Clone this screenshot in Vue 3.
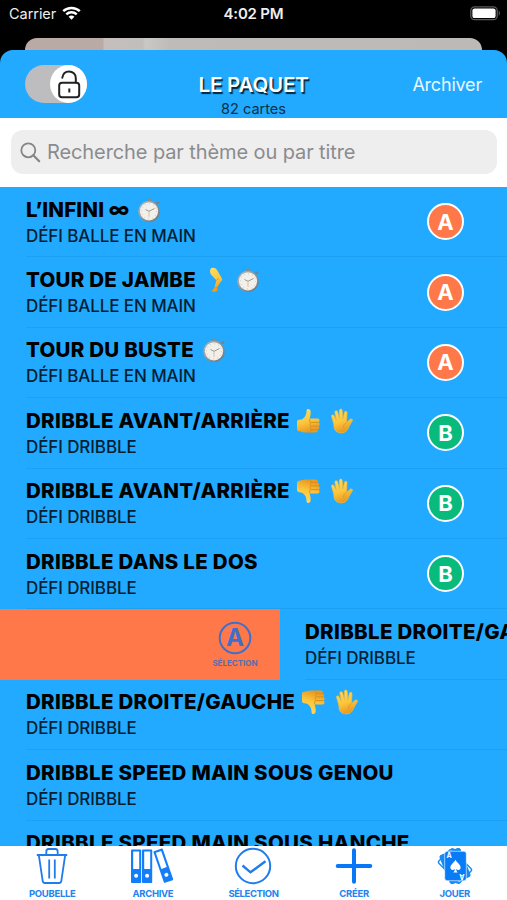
<script setup>
const rows = [
  { title: 'L’INFINI ∞', theme: 'DÉFI BALLE EN MAIN', icons: ['watch'], badge: 'A', fit: 'infini' },
  { title: 'TOUR DE JAMBE', theme: 'DÉFI BALLE EN MAIN', icons: ['leg', 'watch'], badge: 'A', fit: 'tour' },
  { title: 'TOUR DU BUSTE', theme: 'DÉFI BALLE EN MAIN', icons: ['watch'], badge: 'A', fit: 'tour' },
  { title: 'DRIBBLE AVANT/ARRIÈRE', theme: 'DÉFI DRIBBLE', icons: ['up', 'hand'], badge: 'B' },
  { title: 'DRIBBLE AVANT/ARRIÈRE', theme: 'DÉFI DRIBBLE', icons: ['down', 'hand'], badge: 'B' },
  { title: 'DRIBBLE DANS LE DOS', theme: 'DÉFI DRIBBLE', icons: [], badge: 'B' },
  { title: 'DRIBBLE DROITE/GAUCHE', theme: 'DÉFI DRIBBLE', icons: [], swiped: true },
  { title: 'DRIBBLE DROITE/GAUCHE', theme: 'DÉFI DRIBBLE', icons: ['down', 'hand'] },
  { title: 'DRIBBLE SPEED MAIN SOUS GENOU', theme: 'DÉFI DRIBBLE', icons: [] },
  { title: 'DRIBBLE SPEED MAIN SOUS HANCHE', theme: 'DÉFI DRIBBLE', icons: [] },
]
const tabs = [
  { id: 'bin', label: 'POUBELLE' },
  { id: 'archive', label: 'ARCHIVE' },
  { id: 'check', label: 'SÉLECTION' },
  { id: 'plus', label: 'CRÉER' },
  { id: 'cards', label: 'JOUER' },
]
</script>

<template>
  <div class="screen">
    <svg class="defs" width="0" height="0">
      <defs>
        <linearGradient id="skin" x1="0" y1="0" x2="0.3" y2="1">
          <stop offset="0" stop-color="#ffdc68" /><stop offset="0.6" stop-color="#fcc63c" /><stop offset="1" stop-color="#e99b22" />
        </linearGradient>
        <linearGradient id="steel" x1="0" y1="0" x2="1" y2="1">
          <stop offset="0" stop-color="#b5babc" /><stop offset="1" stop-color="#6c7275" />
        </linearGradient>
        <symbol id="watch" viewBox="0 0 24 26">
          <rect x="10" y="1.5" width="4.5" height="4" rx="1" fill="#858b8e" />
          <path d="M18 7 21.5 5.5" stroke="#7b8183" stroke-width="2" stroke-linecap="round" />
          <circle cx="12" cy="14.5" r="10.7" fill="url(#steel)" />
          <circle cx="12" cy="14.3" r="9.1" fill="#f2f0ea" />
          <circle cx="12" cy="14.3" r="7.6" fill="none" stroke="#b9b7b1" stroke-width="1" stroke-dasharray="0.7 3.28" />
          <path d="M8.5 12.5 12 14.3 17.5 11.5" fill="none" stroke="#8a827c" stroke-width="0.8" />
          <path d="M12 14.3V20" stroke="#c99a8e" stroke-width="0.6" />
        </symbol>
        <symbol id="leg" viewBox="0 0 24 26">
          <path d="M7.2 1.2C9 .2 12 1 13.2 3.2L18 11.4C18.8 13 17.5 14 16.4 15.2L13.1 20.5 13.5 23C13.6 24.5 11.5 25 9 24.7 7.2 24.6 7.8 23 9.7 22.3L10.5 20.6 12.4 13.3 7.6 8.2C5.5 6 5.7 2.1 7.2 1.2Z" fill="url(#skin)" />
          <path d="M12.4 13.3 14.7 11.5M10.5 21 13.3 20.4" fill="none" stroke="#d98c1f" stroke-width="0.8" />
        </symbol>
        <symbol id="thumb" viewBox="0 0 24 26">
          <path d="M1 14C1 12 2.4 11.8 4.2 11.8 7.8 11.2 9.5 8.5 10.3 5.6L10.6 2.3C11 .3 14.2.5 14.6 3.2 14.9 6 14.2 8.4 13.7 10.6H21.6C24 10.6 24 14 22.3 14.4 24.3 14.8 24 17.8 22.1 18.1 23.7 18.7 23.3 21.4 21.4 21.6 22.6 22.5 21.5 24.5 19.6 24.6H10C6.6 24.6 5.4 23.7 3 23.3 1 23 1 21.8 1 20Z" fill="url(#skin)" />
          <path d="M22.3 14.4H15.2C13.6 14.4 13.3 12.5 14 10.8M22 18.1H15.5C13.8 18.1 13.7 15.4 15.1 14.4M21.4 21.6H15.8C14.1 21.6 14.1 19 15.5 18.1M15.8 21.6C14.3 22 14.5 23.7 15.1 24.5" fill="none" stroke="#d88c1b" stroke-width="0.9" />
        </symbol>
        <symbol id="hand" viewBox="0 0 24 26">
          <path d="M3.8 16 1.6 8.6C1.1 6.8 3.2 6 4 7.7L6.4 12.4 4.9 4.4C4.6 2.5 7 2 7.6 3.8L9.6 11.3 9.4 2.6C9.4.6 12.1.6 12.2 2.6L12.9 11.3 14.4 4.4C14.8 2.6 17.2 3 17 4.9L16.5 14.8 19.7 11.6C21 10.3 23.3 11.1 22.3 12.8L19.1 18.2C17.8 21.8 15.6 24.9 11.4 24.9 6.5 24.9 4 22 4 18.2Z" fill="url(#skin)" stroke="#f5bb37" stroke-width="0.7" />
          <path d="M16.3 14.8C14.1 15.8 13.3 17.6 13.6 19.6" fill="none" stroke="#dc951f" stroke-width="0.8" stroke-linecap="round" />
        </symbol>
      </defs>
    </svg>

    <header class="top">
      <div class="status">
        <div class="carrier">
          <span>Carrier</span>
          <svg width="19" height="14" viewBox="0 0 19 14">
            <path d="M1.2 5.2C5.8.8 13.2.8 17.8 5.2M4.3 8.3C7.2 5.6 11.8 5.6 14.7 8.3" fill="none" stroke="#fff" stroke-width="2.5" />
            <path d="M9.5 13.7 6.6 10.7C8.3 9.2 10.7 9.2 12.4 10.7Z" fill="#fff" />
          </svg>
        </div>
        <strong>4:02 PM</strong>
        <svg class="battery" width="31" height="15" viewBox="0 0 31 15">
          <rect x="0.8" y="0.8" width="26.4" height="12.9" rx="3.8" fill="none" stroke="#5b5b5b" stroke-width="1.3" />
          <rect x="2.4" y="2.4" width="23.2" height="9.7" rx="2.2" fill="#fff" />
          <path d="M28.7 4.8C30.3 5.3 30.3 9.2 28.7 9.7Z" fill="#5b5b5b" />
        </svg>
      </div>
      <div class="behind"></div>
      <div class="navbar">
        <div class="toggle">
          <div class="knob">
            <svg width="24" height="29" viewBox="0 0 24 29">
              <rect x="2.2" y="12.7" width="20" height="14.6" rx="2.8" fill="none" stroke="#222" stroke-width="2" />
              <path d="M5.3 7.7C6 3.5 8.6 1.5 12 1.5 15.8 1.5 18.8 4.2 18.8 8V12.5" fill="none" stroke="#222" stroke-width="2" stroke-linecap="round" />
              <path d="M12.3 18.5V22.5" stroke="#222" stroke-width="2" />
            </svg>
          </div>
        </div>
        <div class="heading">
          <h1>LE PAQUET</h1>
          <p>82 cartes</p>
        </div>
        <span class="archive">Archiver</span>
      </div>
    </header>

    <div class="search-bar">
      <div class="search">
        <svg width="21" height="21" viewBox="0 0 21 21" fill="none" stroke="#858589" stroke-width="1.8">
          <circle cx="8.3" cy="8.3" r="7" /><path d="M13.3 13.3 19.2 19.2" stroke-width="2.2" stroke-linecap="round" />
        </svg>
        <span>Recherche par thème ou par titre</span>
      </div>
    </div>

    <main class="list">
      <section v-for="(row, i) in rows" :key="i" class="row" :class="{ swiped: row.swiped }">
        <div v-if="row.swiped" class="action">
          <div class="action-button">
            <svg width="34" height="34" viewBox="0 0 34 34">
              <circle cx="17" cy="17" r="15.3" fill="none" stroke="#3e70cb" stroke-width="2" />
              <text x="17" y="25.4" text-anchor="middle" class="action-letter">A</text>
            </svg>
            <span>SÉLECTION</span>
          </div>
        </div>
        <div class="cell">
          <div class="copy">
            <div class="title-line">
              <h2 :class="row.fit">{{ row.title }}</h2>
              <div class="emojis">
                <svg v-for="icon in row.icons" :key="icon" width="24" height="26" :class="icon">
                  <use :href="icon === 'up' || icon === 'down' ? '#thumb' : '#' + icon" />
                </svg>
              </div>
            </div>
            <p>{{ row.theme }}</p>
          </div>
          <div v-if="row.badge" class="badge" :class="row.badge === 'A' ? 'orange' : 'green'">{{ row.badge }}</div>
        </div>
      </section>
    </main>

    <nav class="tabs">
      <div v-for="tab in tabs" :key="tab.id" class="tab">
        <svg v-if="tab.id === 'bin'" width="44" height="38" viewBox="0 0 44 38" fill="none" stroke="#207bed" stroke-width="1.8">
          <path d="M6.8 8H37.2M8.8 8 12.7 34.2C12.9 35.5 13.6 36 15 36H29C30.4 36 31.1 35.5 31.3 34.2L35.2 8M16.3 8V4.7C16.3 2.8 17 2 18.5 2H25.5C27 2 27.7 2.8 27.7 4.7V8M19.2 12.5V31.5M24.8 12.5V31.5" />
        </svg>
        <svg v-else-if="tab.id === 'archive'" width="44" height="38" viewBox="0 0 44 38">
          <g v-for="x in [0, 11]" :key="x">
            <rect :x="x" y="2.5" width="10.2" height="33.5" rx="0.8" fill="#137dfa" />
            <rect :x="x + 2.2" y="4.5" width="6" height="17.5" fill="#fff" />
            <circle :cx="x + 5.1" cy="28.7" r="2" fill="#fff" />
          </g>
          <g transform="rotate(-19 32 19)">
            <rect x="27.5" y="2" width="9.8" height="33.5" rx="0.8" fill="#137dfa" />
            <rect x="29.5" y="4.2" width="5.7" height="17" fill="#fff" />
            <circle cx="32.3" cy="28.4" r="2" fill="#fff" />
          </g>
        </svg>
        <svg v-else-if="tab.id === 'check'" width="44" height="38" viewBox="0 0 44 38" fill="none" stroke="#207bed">
          <circle cx="22" cy="19" r="17.2" stroke-width="2" /><path d="M11.5 18.5 19.5 25.3 34.5 14.3" stroke-width="2.4" />
        </svg>
        <svg v-else-if="tab.id === 'plus'" width="44" height="38" viewBox="0 0 44 38">
          <path d="M22 3.2V34.8M5.7 19H38.3" stroke="#0878f6" stroke-width="4" stroke-linecap="round" />
        </svg>
        <svg v-else width="44" height="38" viewBox="0 0 44 38">
          <g fill="#fff" stroke="#168bf7" stroke-width="1.4">
            <rect x="12.5" y="4" width="19" height="30" rx="2" transform="rotate(-45 22 19)" />
            <rect x="11.5" y="4" width="21" height="30" rx="2" transform="rotate(-22 22 19)" fill="#168bf7" />
          </g>
          <path d="M17 3.2 19 1.5 22.5 2.6 26 1.5 28 3.2M17 35 19 36.6 22.5 35.6 26 36.6 28 35" fill="#168bf7" stroke="#168bf7" stroke-width="1" />
          <rect x="11.7" y="4.3" width="21.6" height="29.4" rx="2.5" fill="#087bf7" stroke="#fff" stroke-width="0.6" />
          <path d="M22.5 12.8C20.8 16 17.2 17.6 17.4 20.8 17.6 23.2 20.3 23.8 21.8 22 21.7 23.5 21.3 24.5 20.3 25.5H24.7C23.7 24.5 23.3 23.5 23.2 22 24.7 23.8 27.5 23.2 27.6 20.8 27.8 17.6 24.2 16 22.5 12.8Z" fill="#fff" />
          <text x="16" y="11.3" text-anchor="middle" class="card-letter">A</text>
          <text x="-29" y="-26.8" text-anchor="middle" class="card-letter" transform="rotate(180)">A</text>
        </svg>
        <span>{{ tab.label }}</span>
      </div>
    </nav>
  </div>
</template>

<style>
body { margin: 0; background: #000; }
</style>

<style scoped>
.screen { width: 507px; height: 900px; display: flex; flex-direction: column; overflow: hidden; background: #000; color: #000; font-family: Inter, "Liberation Sans", sans-serif; }
.defs { position: absolute; }
h1, h2, p { margin: 0; }
.top { height: 118px; flex: none; display: flex; flex-direction: column; }
.status { height: 38px; box-sizing: border-box; padding: 6px 6px 0 9px; display: grid; grid-template-columns: 1fr auto 1fr; align-items: start; color: #eee; font-size: 15px; line-height: 16px; }
.status strong { font-weight: 600; font-size: 15px; letter-spacing: -0.2px; margin-right: 3px; }
.carrier { display: flex; gap: 6px; }
.carrier span { font-size: 14.5px; letter-spacing: -0.05px; }
.battery { justify-self: end; }
.behind { height: 12px; flex: none; margin: 0 25px; border-radius: 12px 12px 0 0; background: linear-gradient(90deg, #b9aaa6 0, #b9aaa6 78px, #c5bfbc 79px, #c1bebb 118px, #cac8c6 120px, #bfbbb8 145px, #bdb9b6 100%); }
.navbar { height: 68px; box-sizing: border-box; padding: 15px 25px 0; border-radius: 13px 13px 0 0; background: #21aaff; display: grid; grid-template-columns: 1fr auto 1fr; align-items: start; }
.toggle { width: 62px; height: 38px; border-radius: 19px; background: #bdbdbf; display: flex; justify-content: flex-end; }
.knob { width: 37px; height: 38px; border-radius: 50%; background: #fff; display: flex; align-items: center; justify-content: center; }
.heading { text-align: center; padding-top: 8px; }
h1 { font-size: 20.5px; line-height: 23px; font-weight: 600; color: #fff; letter-spacing: -0.2px; text-shadow: 1.5px 1.5px 1px #04253a; }
.heading p { font-size: 14.5px; line-height: 18px; color: #0a3048; margin-top: 4px; letter-spacing: 0; }
.archive { justify-self: end; padding-top: 9px; font-size: 18px; line-height: 22px; letter-spacing: -0.2px; color: #e9f7ff; }
.search-bar { height: 69px; box-sizing: border-box; flex: none; background: #fff; padding: 12px 10px 12.5px 11px; }
.search { height: 44px; border-radius: 12px; background: #eee; display: flex; align-items: center; gap: 6px; padding-left: 9px; color: #8b8b8f; font-size: 20px; }
.search span { letter-spacing: -0.1px; white-space: nowrap; }
.list { flex: 1; min-height: 0; overflow: hidden; background: #21aaff; }
.row { height: 70.4px; display: flex; }
.cell { box-sizing: border-box; height: 100%; flex: 1; margin-left: 26px; border-bottom: 1px solid #1ca0f1; padding-right: 43px; display: flex; align-items: center; justify-content: space-between; min-width: 0; }
.swiped .cell { margin-left: 25px; padding-right: 0; }
.copy { white-space: nowrap; padding-top: 1px; }
.title-line { display: flex; align-items: center; gap: 6px; height: 26px; }
h2 { font-size: 20.5px; line-height: 26px; font-weight: 800; letter-spacing: 0.3px; }
.infini { letter-spacing: 0.15px; margin-right: 2px; }
.tour { letter-spacing: 0.25px; margin-right: 2px; }
.copy p { font-size: 17px; line-height: 24px; margin-top: 1px; color: #041e31; font-weight: 500; letter-spacing: -0.1px; }
.emojis { display: flex; gap: 8px; }
.hand { margin-left: 2px; }
.down { transform: scaleY(-1); }
.badge { width: 37px; height: 37px; box-sizing: border-box; border: 2.5px solid #fff; border-radius: 50%; display: flex; align-items: center; justify-content: center; color: #fff; font-size: 22px; font-weight: 700; }
.orange { background: #ff7849; }
.green { background: #08bb7c; }
.action { width: 280px; flex: none; background: #ff7849; display: flex; justify-content: flex-end; }
.action-button { width: 90px; display: flex; flex-direction: column; align-items: center; padding-top: 12px; box-sizing: border-box; }
.action-button span { font-size: 8px; line-height: 10px; margin-top: 3px; font-weight: 700; color: #5b6bad; }
.action-letter { font-size: 24px; font-weight: 700; fill: #3e70cb; }
.tabs { height: 54px; flex: none; background: #fff; display: grid; grid-template-columns: repeat(5, 100.6px); padding-left: 2px; box-sizing: border-box; }
.tab { display: flex; flex-direction: column; align-items: center; padding-top: 1px; color: #2383f0; }
.tab span { font-size: 9.5px; line-height: 12px; margin-top: 3px; font-weight: 700; letter-spacing: -0.3px; }
.tab:nth-child(3) span { letter-spacing: -0.4px; }
.card-letter { font-size: 7px; font-weight: 700; fill: #fff; }
</style>
